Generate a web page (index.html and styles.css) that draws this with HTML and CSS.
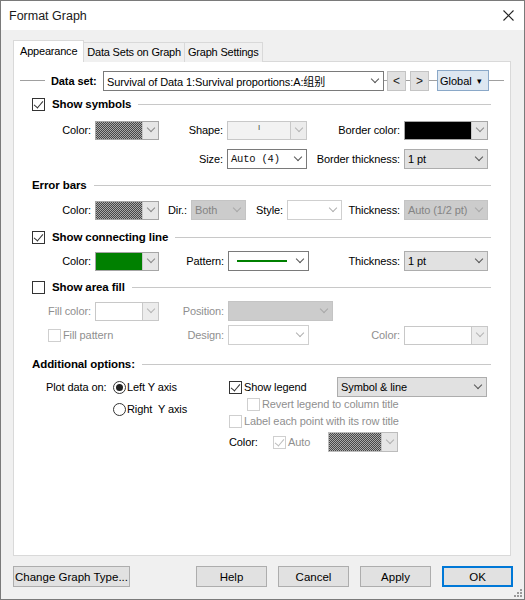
FILE: index.html
```html
<!DOCTYPE html>
<html lang="en">
<head>
    <meta charset="UTF-8">
    <title>Format Graph</title>
    <link rel="stylesheet" href="styles.css">
</head>
<body>
    <div class="window">
        <div class="titlebar">
            <span class="title">Format Graph</span>
            <svg class="close" width="11" height="11" viewBox="0 0 11 11"><path d="M0.5 0.5 L10.5 10.5 M10.5 0.5 L0.5 10.5" stroke="#222" stroke-width="1.1" fill="none"/></svg>
        </div>

        <div class="tabs">
            <div class="tab active">Appearance</div>
            <div class="tab">Data Sets on Graph</div>
            <div class="tab">Graph Settings</div>
        </div>

        <div class="panel">
            <!-- data set selector -->
            <div class="row dataset">
                <span class="rule lead"></span>
                <b class="ds-label">Data set:</b>
                <div class="combo edit ds-combo"><span class="val">Survival of Data 1:Survival proportions:A:组别</span><span class="arrow"></span></div>
                <span class="rule w3"></span>
                <button class="navbtn">&lt;</button>
                <span class="rule w4"></span>
                <button class="navbtn">&gt;</button>
                <span class="rule w8"></span>
                <button class="globalbtn"><span>Global</span><span class="tri">&#9662;</span></button>
                <span class="rule grow"></span>
            </div>

            <!-- symbols -->
            <div class="section s-symbols">
                <span class="box checked"></span>
                <b>Show symbols</b>
                <span class="rule grow"></span>
            </div>
            <div class="row fields r-sym1">
                <label style="width:65px">Color:</label>
                <div class="swatch w64"><span class="fill dither"></span><span class="drop"></span></div>
                <label style="width:68px">Shape:</label>
                <div class="swatch off w80"><span class="fill shape"><i class="glyph">I</i></span><span class="drop"></span></div>
                <label style="width:97px">Border color:</label>
                <div class="swatch w84"><span class="fill black"></span><span class="drop"></span></div>
            </div>
            <div class="row fields r-sym2">
                <label style="width:197px">Size:</label>
                <div class="combo edit w80"><span class="val mono">Auto (4)</span><span class="arrow"></span></div>
                <label style="width:97px">Border thickness:</label>
                <div class="combo list w84"><span class="val">1 pt</span><span class="arrow"></span></div>
            </div>

            <!-- error bars -->
            <div class="section s-error">
                <b>Error bars</b>
                <span class="rule grow"></span>
            </div>
            <div class="row fields r-err">
                <label style="width:65px">Color:</label>
                <div class="swatch w64"><span class="fill dither"></span><span class="drop"></span></div>
                <label style="width:32px">Dir.:</label>
                <div class="combo off w55"><span class="val">Both</span><span class="arrow"></span></div>
                <label style="width:41px">Style:</label>
                <div class="combo blank w55"><span class="val"></span><span class="arrow"></span></div>
                <label style="width:62px">Thickness:</label>
                <div class="combo off w84"><span class="val">Auto (1/2 pt)</span><span class="arrow"></span></div>
            </div>

            <!-- connecting line -->
            <div class="section s-conn">
                <span class="box checked"></span>
                <b>Show connecting line</b>
                <span class="rule grow"></span>
            </div>
            <div class="row fields r-conn">
                <label style="width:65px">Color:</label>
                <div class="swatch w64"><span class="fill green"></span><span class="drop"></span></div>
                <label style="width:69px">Pattern:</label>
                <div class="combo edit w81"><span class="val"><span class="line"></span></span><span class="arrow"></span></div>
                <label style="width:95px">Thickness:</label>
                <div class="combo list w84"><span class="val">1 pt</span><span class="arrow"></span></div>
            </div>

            <!-- area fill -->
            <div class="section s-area">
                <span class="box"></span>
                <b>Show area fill</b>
                <span class="rule grow"></span>
            </div>
            <div class="row fields dim r-fill1">
                <label style="width:65px">Fill color:</label>
                <div class="swatch off w64"><span class="fill"></span><span class="drop"></span></div>
                <label style="width:69px">Position:</label>
                <div class="combo off w105"><span class="val"></span><span class="arrow"></span></div>
            </div>
            <div class="row fields dim r-fill2">
                <span class="check" style="width:111px"><span class="box off"></span>Fill pattern</span>
                <label style="width:69px">Design:</label>
                <div class="combo blank w81"><span class="val"></span><span class="arrow"></span></div>
                <label style="width:95px">Color:</label>
                <div class="swatch off w84"><span class="fill"></span><span class="drop"></span></div>
            </div>

            <!-- additional -->
            <div class="section s-add">
                <b>Additional options:</b>
                <span class="rule grow"></span>
            </div>
            <div class="additional">
                <div class="col-left">
                    <div class="line-a">
                        <span class="plot-label">Plot data on:</span>
                        <span class="radio on"></span>Left Y axis
                    </div>
                    <div class="line-b">
                        <span class="radio"></span>Right&nbsp; Y axis
                    </div>
                </div>
                <div class="col-right">
                    <div class="line-a">
                        <span class="check" style="width:108px"><span class="box checked"></span>Show legend</span>
                        <div class="combo list w150"><span class="val">Symbol &amp; line</span><span class="arrow"></span></div>
                    </div>
                    <div class="line-r dim indent">
                        <span class="check"><span class="box off"></span>Revert legend to column title</span>
                    </div>
                    <div class="line-l dim">
                        <span class="check"><span class="box off"></span>Label each point with its row title</span>
                    </div>
                    <div class="line-c">
                        <span class="color-label">Color:</span>
                        <span class="check dim" style="width:55px"><span class="box off checked"></span>Auto</span>
                        <div class="swatch w70 faded"><span class="fill dither"></span><span class="drop"></span></div>
                    </div>
                </div>
            </div>
        </div>

        <div class="buttons">
            <button class="btn wide">Change Graph Type...</button>
            <div class="right-buttons">
                <button class="btn">Help</button>
                <button class="btn">Cancel</button>
                <button class="btn">Apply</button>
                <button class="btn default">OK</button>
            </div>
        </div>

        <svg class="grip" width="8" height="8" viewBox="0 0 8 8" fill="#9a9a9a">
            <rect x="6" y="0" width="2" height="2"/>
            <rect x="3" y="3" width="2" height="2"/><rect x="6" y="3" width="2" height="2"/>
            <rect x="0" y="6" width="2" height="2"/><rect x="3" y="6" width="2" height="2"/><rect x="6" y="6" width="2" height="2"/>
        </svg>
    </div>
</body>
</html>
```

FILE: styles.css
```css
* {
    margin: 0;
    padding: 0;
    box-sizing: border-box;
}

body {
    background: #f0f0f0;
    font-family: 'Liberation Sans', 'Noto Sans CJK SC', sans-serif;
    font-size: 11px;
    letter-spacing: -0.1px;
    color: #000;
}

.window {
    position: relative;
    width: 525px;
    height: 600px;
    background: #f0f0f0;
    border: 1px solid #7a7a7a;
}

.titlebar {
    display: flex;
    align-items: center;
    justify-content: space-between;
    height: 29px;
    background: #fff;
    padding: 0 10px 0 8px;
}

.title {
    font-size: 12.5px;
    letter-spacing: 0;
    color: #1a1a1a;
}

/* tabs */
.tabs {
    display: flex;
    align-items: flex-end;
    height: 22px;
    margin: 10px 0 -1px 12px;
}

.tab {
    height: 20px;
    line-height: 19px;
    padding: 0 3px;
    border: 1px solid #d9d9d9;
    border-bottom: none;
    background: #f0f0f0;
    margin-left: -1px;
    white-space: nowrap;
    letter-spacing: -0.2px;
}

.tab.active {
    position: relative;
    z-index: 1;
    height: 22px;
    line-height: 20px;
    padding: 0 6px;
    margin-left: 0;
    background: #fff;
}

.panel {
    width: 498px;
    height: 495px;
    margin-left: 12px;
    background: #fff;
    border: 1px solid #d9d9d9;
}

/* generic rows */
.row {
    display: flex;
    align-items: center;
}

.rule {
    height: 1px;
    background: #a0a0a0;
}

.rule.grow { flex: 1; }
.rule.w3 { width: 3px; }
.rule.w4 { width: 4px; }
.rule.w8 { width: 8px; }

.dataset {
    height: 21px;
    margin-top: 8px;
    padding: 0 6px;
}

.rule.lead {
    width: 25px;
    margin-right: 6px;
}

.ds-label {
    width: 52px;
}

.ds-combo {
    width: 281px;
    height: 21px;
}

.navbtn {
    width: 19px;
    height: 20px;
    background: #e1e1e1;
    border: 1px solid #c4c4c4;
    font: inherit;
    font-size: 12px;
    color: #222;
}

.globalbtn {
    width: 52px;
    height: 21px;
    background: #dde7f1;
    border: 1px solid #8aa8c8;
    font: inherit;
    font-size: 11px;
    display: flex;
    align-items: center;
    justify-content: space-between;
    padding: 0 6px 0 2px;
}

.globalbtn .tri {
    font-size: 9px;
}

/* section headers */
.section {
    display: flex;
    align-items: center;
    height: 16px;
    padding: 0 19px 0 18px;
}

.section b {
    font-size: 11.5px;
    margin-right: 7px;
}

.section .box {
    margin-right: 7px;
}

.section .rule {
    background: #c8c8c8;
}

.s-symbols { margin-top: 5px; }
.s-error { margin-top: 8px; }
.s-conn { margin-top: 9px; }
.s-area { margin-top: 8px; }
.s-add { margin-top: 11px; }

.fields {
    height: 20px;
    padding-left: 16px;
}

.fields label {
    text-align: right;
    padding-right: 4px;
    white-space: nowrap;
}

.r-sym1 { margin-top: 8px; }
.r-sym2 { margin-top: 8px; height: 21px; }
.r-err { margin-top: 7px; }
.r-conn { margin-top: 6px; }
.r-fill1 { margin-top: 6px; }
.r-fill2 { margin-top: 4px; padding-left: 34px; }

.dim { color: #8f8f8f; }

/* widths */
.w55 { width: 55px; }
.w64 { width: 64px; }
.w70 { width: 70px; }
.w80 { width: 80px; }
.w81 { width: 81px; }
.w84 { width: 84px; }
.w105 { width: 105px; }
.w150 { width: 150px; }

/* combo boxes */
.combo {
    display: flex;
    align-items: center;
    height: 20px;
    border: 1px solid #7a7a7a;
    background: #fff;
    color: #000;
}

.combo .val {
    flex: 1;
    padding-left: 3px;
    white-space: nowrap;
    overflow: hidden;
}

.combo .arrow,
.swatch .drop {
    width: 17px;
    height: 100%;
    display: flex;
    justify-content: center;
    align-items: center;
}

.combo .arrow::after,
.swatch .drop::after {
    content: '';
    width: 5px;
    height: 5px;
    border-right: 1px solid #555;
    border-bottom: 1px solid #555;
    transform: rotate(45deg);
    margin-top: -4px;
}

.combo.list {
    background: #e1e1e1;
    border-color: #adadad;
}

.combo.off {
    background: #cccccc;
    border-color: #c4c4c4;
    color: #848484;
}

.combo.off .arrow::after {
    border-color: #a8a8a8;
}

.combo.blank {
    border-color: #cfcfcf;
}

.combo.blank .arrow::after {
    border-color: #b0b0b0;
}

.mono {
    font-family: 'Liberation Mono', monospace;
    font-size: 10.5px;
    letter-spacing: -0.2px;
    color: #111;
}

.line {
    display: block;
    width: 50px;
    height: 2px;
    margin-left: 5px;
    background: #008000;
}

/* colour swatch combos */
.swatch {
    display: flex;
    height: 19px;
    border: 1px solid #a6a6a6;
    background: #fff;
}

.swatch .fill {
    flex: 1;
    display: flex;
    justify-content: center;
}

.swatch .drop {
    border-left: 1px solid #c8c8c8;
    background: #e6e6e6;
    width: 16px;
}

.swatch .drop::after {
    border-color: #8a8a8a;
}

.dither {
    background: repeating-conic-gradient(#474747 0 25%, #a9a9a9 0 50%) 0 0 / 2px 2px;
}

.black { background: #000; }
.green { background: #008000; }

.swatch.off {
    border-color: #c8c8c8;
}

.swatch.off .drop {
    background: #ececec;
}

.swatch.off .drop::after {
    border-color: #b4b4b4;
}

.shape {
    background: #f2f2f2;
}

.glyph {
    font-style: normal;
    font-size: 8px;
    line-height: 11px;
    color: #444;
}

.swatch.faded {
    height: 20px;
    border-color: #bcbcbc;
}

.swatch.faded .drop::after {
    border-color: #b0b0b0;
}

/* checkboxes and radios */
.box {
    display: inline-flex;
    justify-content: center;
    width: 13px;
    height: 13px;
    border: 1px solid #333;
    background: #fff;
    flex: none;
}

.box.checked::after {
    content: '';
    width: 4px;
    height: 8px;
    border-right: 1px solid #333;
    border-bottom: 1px solid #333;
    transform: rotate(40deg);
}

.box.off {
    border-color: #cfcfcf;
}

.box.off.checked::after {
    border-color: #bdbdbd;
}

.check {
    display: inline-flex;
    align-items: center;
    white-space: nowrap;
}

.check .box {
    margin-right: 2px;
}

.radio {
    display: inline-flex;
    justify-content: center;
    align-items: center;
    width: 13px;
    height: 13px;
    border: 1px solid #333;
    border-radius: 50%;
    background: #fff;
    margin-right: 1px;
}

.radio.on::after {
    content: '';
    width: 7px;
    height: 7px;
    border-radius: 50%;
    background: #222;
}

/* additional options */
.additional {
    display: flex;
    margin-top: 5px;
}

.col-left {
    width: 215px;
    padding-left: 32px;
}

.col-left .line-a,
.col-left .line-b {
    display: flex;
    align-items: center;
    height: 20px;
}

.col-left .line-b {
    margin-top: 2px;
    padding-left: 67px;
}

.plot-label {
    width: 67px;
}

.col-right .line-a {
    display: flex;
    align-items: center;
    height: 20px;
}

.line-r,
.line-l {
    display: flex;
    align-items: center;
    height: 14px;
}

.line-r.indent { padding-left: 18px; }
.line-l { margin-top: 3px; }

.line-c {
    display: flex;
    align-items: center;
    height: 20px;
    margin-top: 4px;
}

.color-label {
    width: 44px;
}

/* dialog buttons */
.buttons {
    display: flex;
    justify-content: space-between;
    margin-top: 10px;
    padding: 0 11px 0 12px;
}

.right-buttons {
    display: flex;
    gap: 11px;
}

.btn {
    width: 71px;
    height: 21px;
    background: #e1e1e1;
    border: 1px solid #adadad;
    font: inherit;
    font-size: 11.5px;
    color: #000;
}

.btn.wide {
    width: 117px;
}

.btn.default {
    border: 2px solid #0078d7;
}

.grip {
    position: absolute;
    right: 2px;
    bottom: 2px;
}
```
